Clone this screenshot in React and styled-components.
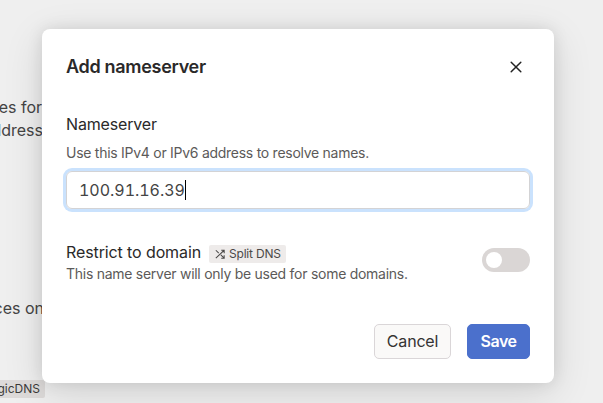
import React from "react";
import styled, { createGlobalStyle } from "styled-components";

const Global = createGlobalStyle`
  * { box-sizing: border-box; }
  body { margin: 0; overflow: hidden; font-family: Inter, "Liberation Sans", sans-serif; color: #2a2929; }
  button, input { font: inherit; color: inherit; }
`;
const Page = styled.main`
  position: relative; width: 603px; height: 403px; overflow: hidden; background: #efefef;
`;
const Snippet = styled.span`
  position: absolute; top: ${p => p.$top}px; right: ${p => p.$right}px;
  font-size: 16px; line-height: 23px; color: #444; white-space: nowrap; text-align: right;
`;
const BackBadge = styled.span`
  position: absolute; top: 380px; right: 558px; height: 18px; padding: 0 5px; border-radius: 2px;
  font-size: 12px; line-height: 18px; background: #dddad9; color: #3c3a39;
`;
const Dialog = styled.section`
  position: absolute; left: 42px; top: 29px; width: 512px; height: 354px; padding: 24px;
  display: flex; flex-direction: column; background: #fff; border-radius: 8px;
  box-shadow: 0 10px 40px rgba(0,0,0,.12), 0 0 16px rgba(0,0,0,.1);
`;
const Header = styled.header`
  display: flex; justify-content: space-between; align-items: center; height: 28px;
`;
const Title = styled.h1` margin: 0; font-size: 18px; line-height: 28px; font-weight: 600; letter-spacing: -.3px; `;
const Close = styled.button`
  width: 28px; height: 28px; padding: 0; border: 0; background: none; display: grid; place-items: center;
`;
const Label = styled.label`
  margin-top: 31px; font-size: 16px; line-height: 24px; font-weight: 400; letter-spacing: -.16px;
`;
const Help = styled.p`
  margin: ${p => p.$gap || 0}px 0 0; font-size: 14px; line-height: 20px; letter-spacing: -.27px; color: #5c5a59;
`;
const Field = styled.div`
  margin-top: 8px; height: 38px; flex: none; padding: 0 12px; display: flex; align-items: center;
  border: 1px solid #d3d3d5; border-radius: 6px; box-shadow: 0 0 0 3px #cae2fd;
  font-size: 16px; font-variant-numeric: tabular-nums; letter-spacing: -.03px; color: #444;
`;
const Caret = styled.i` width: 1px; height: 20px; background: #000; `;
const Row = styled.div` margin-top: 31px; display: flex; justify-content: space-between; `;
const RowTitle = styled.div`
  display: flex; align-items: center; gap: 8px; font-size: 16px; line-height: 24px; font-weight: 400;
  letter-spacing: -.11px;
`;
const Badge = styled.span`
  height: 18px; margin-top: 3px; padding: 0 5px 0 6px; display: flex; align-items: center; gap: 4px;
  background: #eeebea; color: #4b4948; border-radius: 2px; font-size: 12px; letter-spacing: -.2px;
`;
const Toggle = styled.button`
  margin-top: 8px; width: 48px; height: 24px; padding: 4px; border: 0; border-radius: 12px; background: #dad6d5;
`;
const Knob = styled.span` display: block; width: 16px; height: 16px; border-radius: 50%; background: #fff; `;
const Footer = styled.footer` margin-top: auto; display: flex; justify-content: flex-end; gap: 16px; `;
const Button = styled.button`
  width: ${p => p.$primary ? 63 : 77}px; height: 35px; padding: 0 0 1px; border-radius: 5px; font-size: 16px;
  font-weight: ${p => p.$primary ? 600 : 400}; letter-spacing: ${p => p.$primary ? -.5 : -.2}px;
  border: 1px solid ${p => p.$primary ? "#4b70cc" : "#dad6d8"};
  background: ${p => p.$primary ? "#4b70cc" : "#faf9f8"}; color: ${p => p.$primary ? "#fff" : "#353333"};
`;

export default function App() {
  return (
    <>
      <Global />
      <Page>
        <Snippet $top={96} $right={561}>es for</Snippet>
        <Snippet $top={119} $right={560}>ddress</Snippet>
        <Snippet $top={297} $right={559}>ces on</Snippet>
        <BackBadge>gicDNS</BackBadge>
        <Dialog>
          <Header>
            <Title>Add nameserver</Title>
            <Close aria-label="Close">
              <svg width="12" height="12" viewBox="0 0 12 12" fill="none" stroke="#222" strokeWidth="1.5" strokeLinecap="round"><path d="M1.2 1.2l9.6 9.6M10.8 1.2L1.2 10.8" /></svg>
            </Close>
          </Header>
          <Label>Nameserver</Label>
          <Help $gap={7}>Use this IPv4 or IPv6 address to resolve names.</Help>
          <Field>100.91.16.39<Caret /></Field>
          <Row>
            <div>
              <RowTitle>Restrict to domain
                <Badge>
                  <svg width="10" height="10" viewBox="0 0 24 24" fill="none" stroke="currentColor" strokeWidth="2.5"><path d="M15 3h7v7M2 22L22 3M22 15v7h-7M14 14l8 8M2 3l7 7" /></svg>
                  Split DNS
                </Badge>
              </RowTitle>
              <Help>This name server will only be used for some domains.</Help>
            </div>
            <Toggle aria-label="Restrict to domain"><Knob /></Toggle>
          </Row>
          <Footer><Button>Cancel</Button><Button $primary>Save</Button></Footer>
        </Dialog>
      </Page>
    </>
  );
}
